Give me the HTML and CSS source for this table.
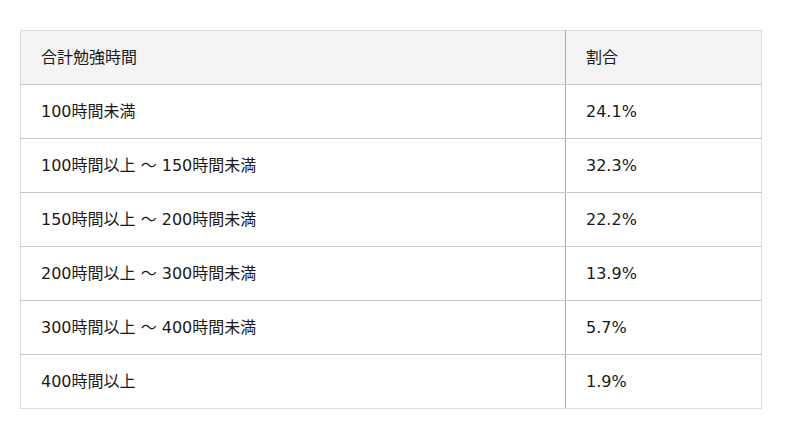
FILE: index.html
```html
<!DOCTYPE html>
<html lang="ja">
<head>
<meta charset="utf-8">
<link rel="stylesheet" href="styles.css">
</head>
<body>
<table class="data">
  <thead>
    <tr><th class="c1">合計勉強時間</th><th class="c2">割合</th></tr>
  </thead>
  <tbody>
    <tr><td class="c1">100時間未満</td><td class="c2">24.1%</td></tr>
    <tr><td class="c1">100時間以上 ～ 150時間未満</td><td class="c2">32.3%</td></tr>
    <tr><td class="c1">150時間以上 ～ 200時間未満</td><td class="c2">22.2%</td></tr>
    <tr><td class="c1">200時間以上 ～ 300時間未満</td><td class="c2">13.9%</td></tr>
    <tr><td class="c1">300時間以上 ～ 400時間未満</td><td class="c2">5.7%</td></tr>
    <tr><td class="c1">400時間以上</td><td class="c2">1.9%</td></tr>
  </tbody>
</table>
</body>
</html>
```
FILE: styles.css
```css
html, body {
  margin: 0;
  padding: 0;
  background: #fff;
}
body {
  padding: 30px 38px 0 20px;
  font-family: "DejaVu Sans", "Noto Sans CJK JP", sans-serif;
  font-size: 16px;
  line-height: 22px;
  color: #1a1a1a;
}
.data {
  width: 742px;
  border-collapse: collapse;
  border: 1px solid #dcdcdc;
}
.data th, .data td {
  height: 54px;
  padding: 0 0 0 20px;
  text-align: left;
  vertical-align: middle;
  font-weight: normal;
  line-height: 22px;
  border-bottom: 1px solid #c8c8c8;
  box-sizing: border-box;
}
.data tr:last-child td {
  border-bottom: 1px solid #dcdcdc;
}
.data thead th {
  background: #f4f4f4;
}
.data .c1 {
  width: 545px;
  border-right: 1px solid #a8a8a8;
}
.data .c2 {
  padding-left: 20px;
}
```
